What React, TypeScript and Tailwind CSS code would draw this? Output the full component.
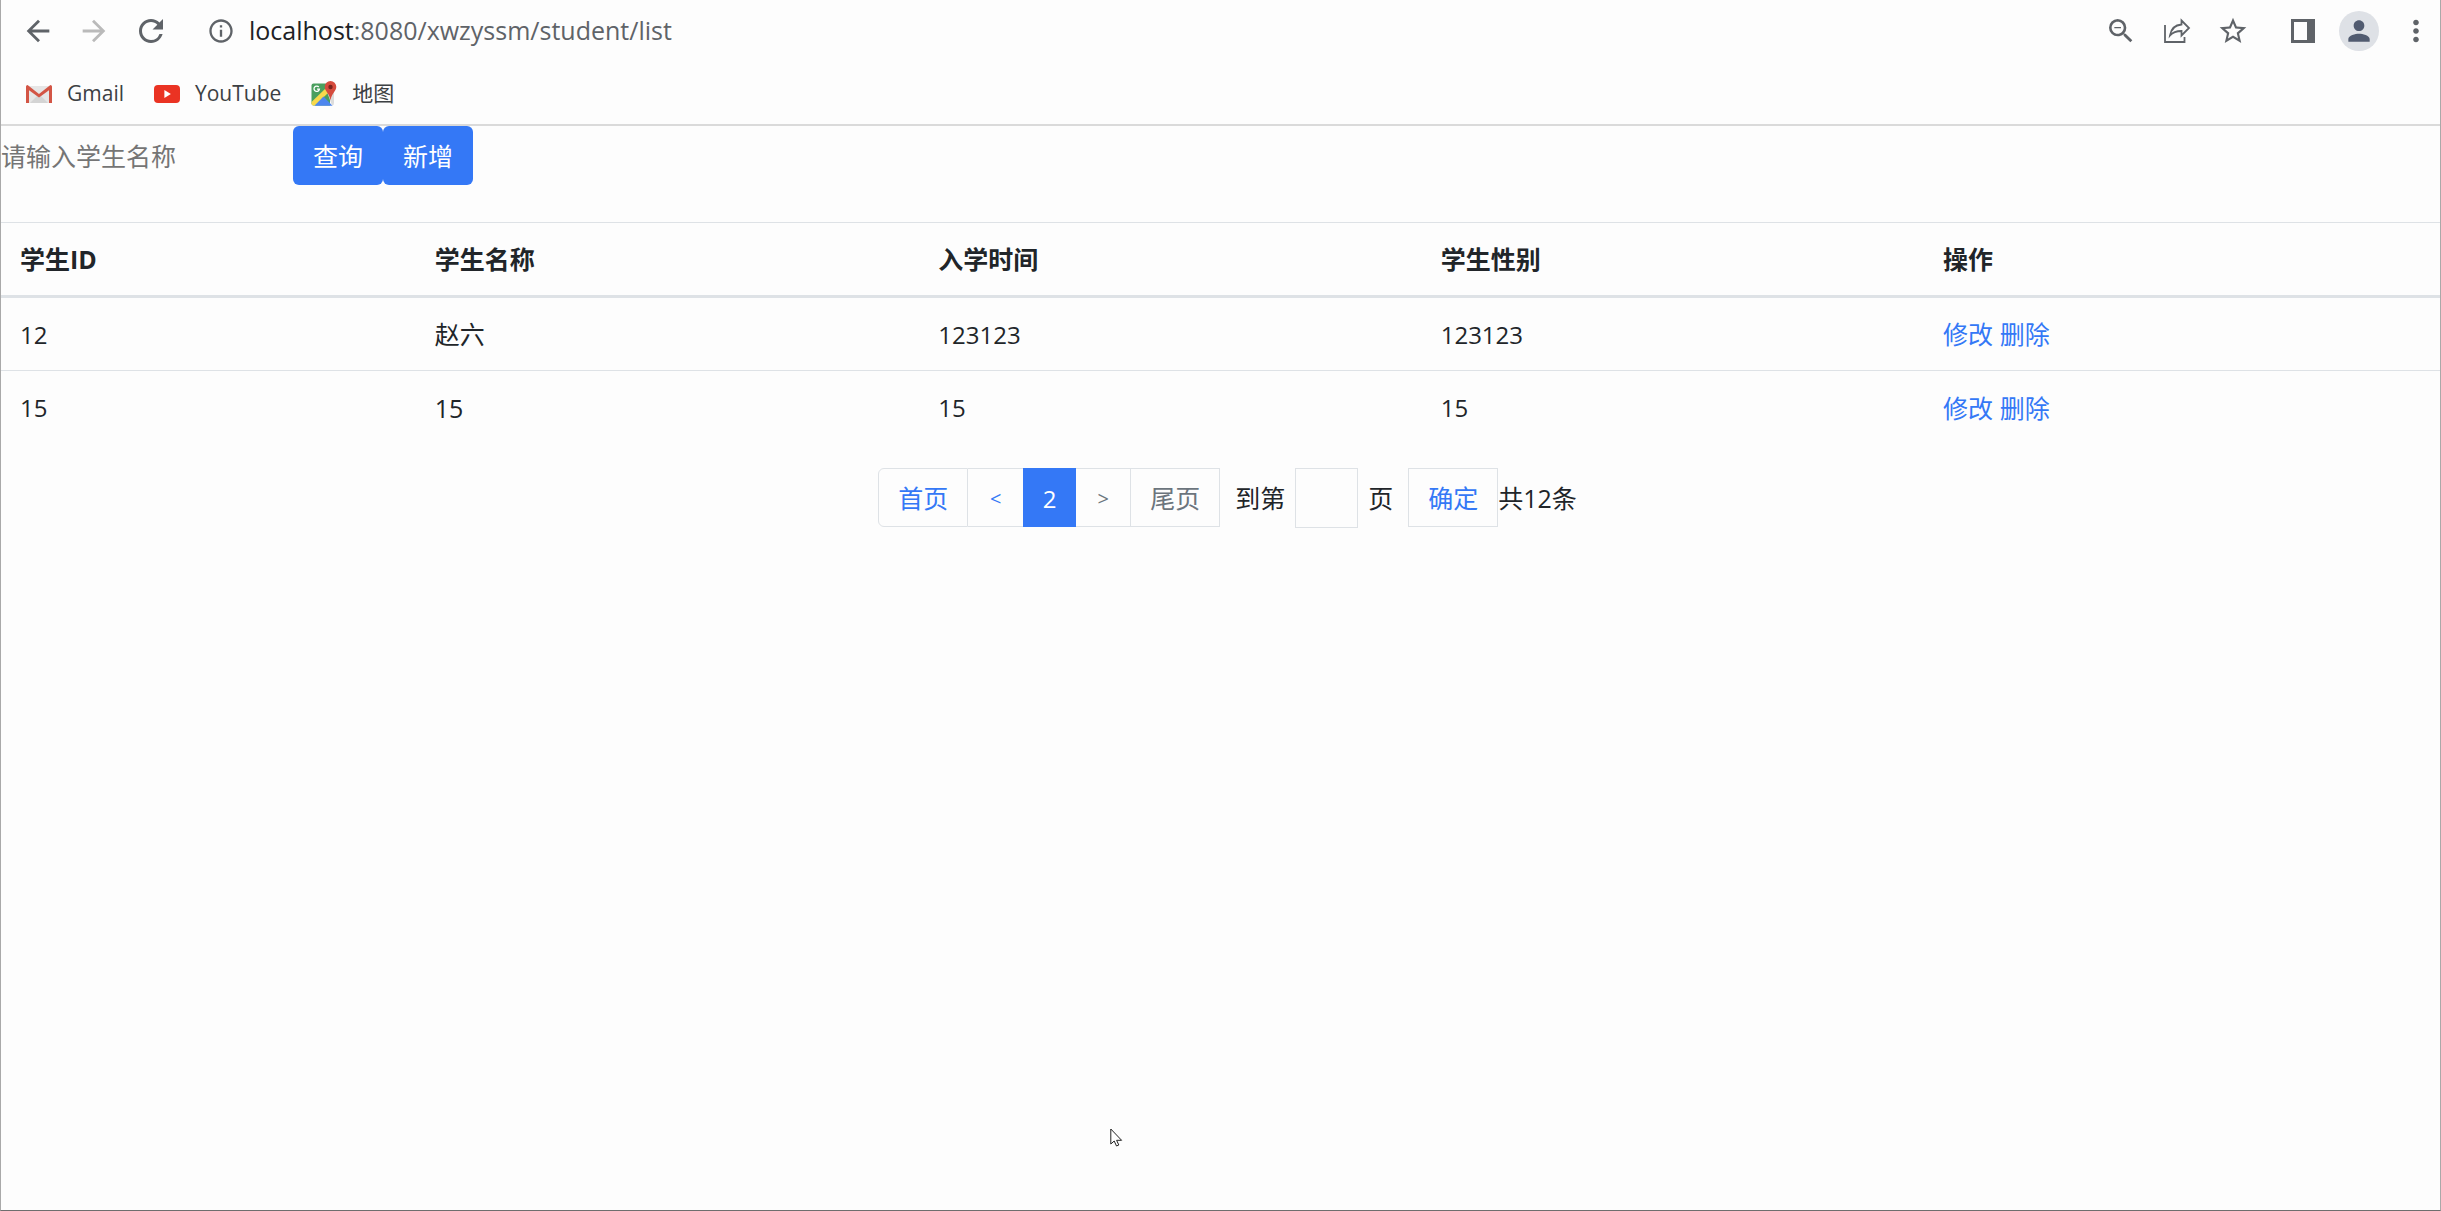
import React, { useState } from "react";
import {
  MdArrowBack,
  MdArrowForward,
  MdRefresh,
  MdInfoOutline,
  MdOutlineZoomOut,
  MdStarBorder,
  MdMoreVert,
  MdPerson,
} from "react-icons/md";

interface Student {
  id: string;
  name: string;
  enrolled: string;
  gender: string;
}

const STUDENTS: Student[] = [
  { id: "12", name: "赵六", enrolled: "123123", gender: "123123" },
  { id: "15", name: "15", enrolled: "15", gender: "15" },
];

const GmailIcon = () => (
  <svg viewBox="0 0 26 20" className="h-5 w-[26px]">
    <path d="M1 2h24v17H1z" fill="#e6e6e6" />
    <path d="M4 19l9-9 9 9z" fill="#d4d4d4" />
    <path d="M0 2.5Q0 1 1.6 1L13 10 24.4 1Q26 1 26 2.5V19h-3V6.2L13 13.5 3 6.2V19H0z" fill="#d35545" />
  </svg>
);

const YouTubeIcon = () => (
  <svg viewBox="0 0 26 18" className="h-[18px] w-[26px]">
    <rect width="26" height="18" rx="4" fill="#ea3323" />
    <path d="M10.4 5v8l6.5-4z" fill="#fff" />
  </svg>
);

const MapsIcon = () => (
  <svg viewBox="0 0 26 26" className="size-[26px]">
    <path d="M2.5 2.5H19v22H2.5q-2 0-2-2v-18q0-2 2-2z" fill="#4a9f5e" />
    <path d="M16 11l7-2v13q0 2.5-2 2.5z" fill="#dcdcdc" />
    <path d="M.5 21L14.5 7.5 17 12 4 24.5H2.5q-2 0-2-2z" fill="#f7d94c" />
    <path d="M3.5 24.8L12.5 15.5 21.5 24.8z" fill="#4d86ee" />
    <path d="M7.8 6A2.7 2.7 0 1 0 8.4 8.2H6" fill="none" stroke="#fff" strokeWidth="1.3" />
    <path d="M19.5 0a5.8 5.8 0 0 1 5.8 5.8c0 4.2-4.6 6.4-5.8 13.5-1.2-7.1-5.8-9.3-5.8-13.5A5.8 5.8 0 0 1 19.5 0z" fill="#d54b3d" />
    <circle cx="19.5" cy="6" r="2.2" fill="#7a231c" />
  </svg>
);

const ShareIcon = () => (
  <svg viewBox="0 0 28 26" className="h-[26px] w-7" fill="none" stroke="#5f6368" strokeWidth="1.8">
    <path d="M2 7v17h19.5v-5" />
    <path d="M18.5 2.5l7.5 7.5-7.5 7.5v-4.500c-5 0-8.5 1-11.5 4.5 1-6 4.5-10.500 11.5-11z" />
  </svg>
);

const SidePanelIcon = () => (
  <svg viewBox="0 0 24 24" className="size-6">
    <path d="M0 0h24v24H0zM3 3v18h13V3z" fill="#5f6368" fillRule="evenodd" />
  </svg>
);

const BrowserBar = () => (
  <header className="border-b-2 border-[#dadada]">
    <nav className="flex h-[62px] items-center justify-between pr-[7px] pl-5 text-[#5f6368]">
      <div className="flex items-center">
        <button aria-label="后退" className="mr-[22px]">
          <MdArrowBack size={34} />
        </button>
        <button aria-label="前进" className="mr-[22px] text-[#bababa]">
          <MdArrowForward size={34} />
        </button>
        <button aria-label="刷新" className="mr-[38px]">
          <MdRefresh size={36} />
        </button>
        <button aria-label="网站信息" className="mr-[14px]">
          <MdInfoOutline size={28} />
        </button>
        <span className="text-[25px]">
          <span className="text-[#202124]">localhost</span>:8080/xwzyssm/student/list
        </span>
      </div>
      <div className="flex items-center">
        <button aria-label="缩放" className="mr-[26px]">
          <MdOutlineZoomOut size={32} />
        </button>
        <button aria-label="分享" className="mr-[26px]">
          <ShareIcon />
        </button>
        <button aria-label="收藏" className="mr-[42px]">
          <MdStarBorder size={32} />
        </button>
        <button aria-label="侧边栏" className="mr-6">
          <SidePanelIcon />
        </button>
        <button
          aria-label="个人资料"
          className="mr-5 flex size-10 items-center justify-center rounded-full bg-[#dee1e6] text-[#515b70]"
        >
          <MdPerson size={32} />
        </button>
        <button aria-label="菜单">
          <MdMoreVert size={34} />
        </button>
      </div>
    </nav>
    <nav className="flex h-[62px] items-center gap-[30px] pt-0.5 pl-[25px] text-[21px] text-[#3c4043]">
      <a href="#gmail" className="flex items-center gap-[15px]">
        <GmailIcon />
        Gmail
      </a>
      <a href="#youtube" className="flex items-center gap-[15px]">
        <YouTubeIcon />
        YouTube
      </a>
      <a href="#maps" className="flex items-center gap-[15px]">
        <MapsIcon />
        地图
      </a>
    </nav>
  </header>
);

const StudentTable = () => (
  <table className="w-full table-fixed border-collapse text-left">
    <colgroup>
      <col className="w-[17%]" />
      <col className="w-[20.65%]" />
      <col className="w-[20.6%]" />
      <col className="w-[20.6%]" />
      <col />
    </colgroup>
    <thead>
      <tr className="h-[74px] border-t border-b-3 border-[#dee2e6]">
        <th className="px-[19px] pt-0.5">学生ID</th>
        <th className="px-[19px] pt-0.5">学生名称</th>
        <th className="px-[19px] pt-0.5">入学时间</th>
        <th className="px-[19px] pt-0.5">学生性别</th>
        <th className="px-[19px] pt-0.5">操作</th>
      </tr>
    </thead>
    <tbody>
      {STUDENTS.map((s) => (
        <tr key={s.id} className="h-[74px] border-[#dee2e6] not-first:h-[73px] not-first:border-t">
          <td className="px-[19px] pt-0.5 text-2xl">{s.id}</td>
          <td className="px-[19px] pt-0.5">{s.name}</td>
          <td className="px-[19px] pt-0.5 text-2xl">{s.enrolled}</td>
          <td className="px-[19px] pt-0.5 text-2xl">{s.gender}</td>
          <td className="px-[19px] pt-0.5 text-[#3478f6]">
            <a href="#edit">修改</a> <a href="#delete">删除</a>
          </td>
        </tr>
      ))}
    </tbody>
  </table>
);

const Pagination = () => {
  const [page, setPage] = useState("");

  return (
    <div className="flex items-center justify-center pt-6 pl-3.5">
      <button className="h-[59px] rounded-l-md border border-[#dee2e6] px-[19px] pt-0.5 text-[#3478f6]">
        首页
      </button>
      <button className="h-[59px] w-[55px] border-y border-[#dee2e6] pt-0.5 text-xl text-[#3478f6]">
        &lt;
      </button>
      <button className="h-[59px] w-[53px] bg-[#3478f6] pt-0.5 text-2xl text-white">2</button>
      <button className="h-[59px] w-[54px] border-y border-[#dee2e6] pt-0.5 text-xl text-[#6c757d]">
        &gt;
      </button>
      <button className="h-[59px] border border-[#dee2e6] px-[19px] pt-0.5 text-[#6c757d]">
        尾页
      </button>
      <label htmlFor="page" className="mr-[10px] ml-[15px] pt-0.5">
        到第
      </label>
      <input
        id="page"
        value={page}
        onChange={(e) => setPage(e.target.value)}
        className="h-[60px] w-[63px] border border-[#dee2e6] text-center"
      />
      <span className="mr-[15px] ml-[10px] pt-0.5">页</span>
      <button className="h-[59px] border border-[#dee2e6] px-[19px] pt-0.5 text-[#3478f6]">
        确定
      </button>
      <span className="pt-0.5">共12条</span>
    </div>
  );
};

const Cursor = () => (
  <svg viewBox="0 0 14 20" className="absolute top-[1128px] left-[1109px] h-5 w-3.5">
    <path d="M.8 1v15l3.4-3 2.3 5 2.3-1-2.2-4.7h5z" fill="#fff" stroke="#222" strokeWidth="1" />
  </svg>
);

export default function App() {
  const [keyword, setKeyword] = useState("");

  return (
    <div className="relative min-h-screen border-x border-b border-x-[#a9a9a9] border-b-[#6e6e6e] bg-[#fdfdfd] font-['Open_Sans','Noto_Sans_CJK_SC',sans-serif] text-[25px] text-[#212529]">
      <BrowserBar />
      <main>
        <form className="mb-[37px] flex" onSubmit={(e) => e.preventDefault()}>
          <input
            aria-label="学生名称"
            placeholder="请输入学生名称"
            value={keyword}
            onChange={(e) => setKeyword(e.target.value)}
            className="w-[292px] pt-0.5 outline-none placeholder:text-[#757575]"
          />
          <button className="h-[59px] rounded-md bg-[#3478f6] px-5 pt-0.5 text-white">查询</button>
          <button className="h-[59px] rounded-md bg-[#3478f6] px-5 pt-0.5 text-white">新增</button>
        </form>
        <StudentTable />
        <Pagination />
      </main>
      <Cursor />
    </div>
  );
}
